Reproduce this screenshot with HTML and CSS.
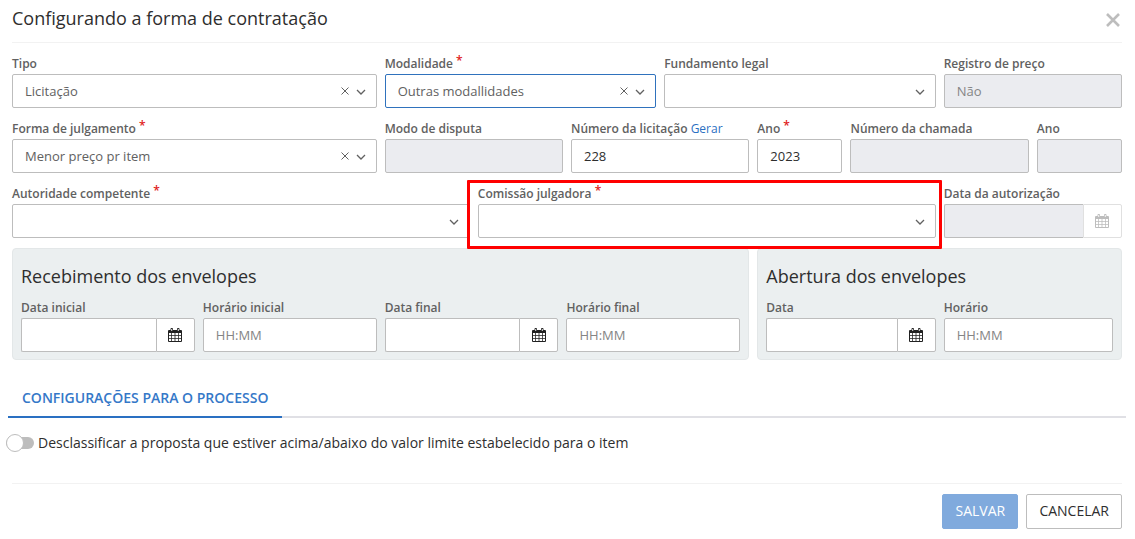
FILE: index.html
```html
<!DOCTYPE html>
<html lang="pt-BR">
<head>
<meta charset="utf-8">
<meta name="viewport" content="width=device-width, initial-scale=1">
<title>Configurando a forma de contratação</title>
<link rel="stylesheet" href="styles.css">
</head>
<body>
<svg class="sprite" aria-hidden="true">
  <symbol id="chevron" viewBox="0 0 10 6"><path d="M1 1l4 4 4-4" fill="none" stroke="currentColor" stroke-width="1.3"/></symbol>
  <symbol id="cross" viewBox="0 0 8 8"><path d="M.5.5l7 7M7.500.5l-7 7" fill="none" stroke="currentColor" stroke-width="1"/></symbol>
  <symbol id="calendar" viewBox="0 0 14 14"><path fill="currentColor" fill-rule="evenodd" d="M1 2h1.500V1q0-1 1-1h.5q1 0 1 1v1h4V1q0-1 1-1h.5q1 0 1 1v1H13q1 0 1 1v10q0 1-1 1H1q-1 0-1-1V3q0-1 1-1zM3.300 1v2h.9V1zM9.800 1v2h.9V1zM1 5v2h2.250V5zM4 5v2h2.600V5zM7.400 5v2H10V5zM10.750 5v2H13V5zM1 7.800v2.100h2.250V7.800zM4 7.800v2.100h2.600V7.800zM7.400 7.800v2.100H10V7.800zM10.750 7.800v2.100H13V7.800zM1 10.700V13h2.250v-2.300zM4 10.700V13h2.600v-2.300zM7.400 10.700V13H10v-2.300zM10.750 10.700V13H13v-2.300z"/></symbol>
</svg>
<form class="dialog">
  <header class="dialog-header">
    <h1 class="title">Configurando a forma de contratação</h1>
    <button class="close" type="button" aria-label="Fechar"><svg viewBox="0 0 14 14"><path d="M1 1l12 12M13 1L1 13" fill="none" stroke="currentColor" stroke-width="2.600"/></svg></button>
  </header>

  <div class="grid">
    <div class="field span-4">
      <label class="label" for="tipo">Tipo</label>
      <div class="select"><select id="tipo" class="control"><option>Licitação</option></select><button class="clear" type="button" aria-label="Limpar tipo"><svg><use href="#cross"/></svg></button><svg class="arrow"><use href="#chevron"/></svg></div>
    </div>
    <div class="field span-3">
      <label class="label" for="modalidade">Modalidade <span class="required">*</span></label>
      <div class="select"><select id="modalidade" class="control active"><option>Outras modallidades</option></select><button class="clear" type="button" aria-label="Limpar modalidade"><svg><use href="#cross"/></svg></button><svg class="arrow"><use href="#chevron"/></svg></div>
    </div>
    <div class="field span-3">
      <label class="label" for="fundamento">Fundamento legal</label>
      <div class="select"><select id="fundamento" class="control"><option></option></select><svg class="arrow"><use href="#chevron"/></svg></div>
    </div>
    <div class="field span-2">
      <label class="label" for="registro">Registro de preço</label>
      <input id="registro" class="control" type="text" value="Não" disabled>
    </div>

    <div class="field span-4">
      <label class="label" for="forma">Forma de julgamento <span class="required">*</span></label>
      <div class="select"><select id="forma" class="control"><option>Menor preço pr item</option></select><button class="clear" type="button" aria-label="Limpar forma de julgamento"><svg><use href="#cross"/></svg></button><svg class="arrow"><use href="#chevron"/></svg></div>
    </div>
    <div class="field span-2">
      <label class="label" for="modo">Modo de disputa</label>
      <input id="modo" class="control" type="text" disabled>
    </div>
    <div class="field span-2">
      <div class="label"><label for="numero">Número da licitação</label> <a class="link" href="#numero">Gerar</a></div>
      <input id="numero" class="control" type="text" value="228">
    </div>
    <div class="field">
      <label class="label" for="ano">Ano <span class="required">*</span></label>
      <input id="ano" class="control" type="text" value="2023">
    </div>
    <div class="field span-2">
      <label class="label" for="chamada">Número da chamada</label>
      <input id="chamada" class="control" type="text" disabled>
    </div>
    <div class="field">
      <label class="label" for="ano-chamada">Ano</label>
      <input id="ano-chamada" class="control" type="text" disabled>
    </div>

    <div class="field span-5">
      <label class="label" for="autoridade">Autoridade competente <span class="required">*</span></label>
      <div class="select"><select id="autoridade" class="control"><option></option></select><svg class="arrow"><use href="#chevron"/></svg></div>
    </div>
    <div class="field span-5 highlight">
      <label class="label" for="comissao">Comissão julgadora <span class="required">*</span></label>
      <div class="select"><select id="comissao" class="control"><option></option></select><svg class="arrow"><use href="#chevron"/></svg></div>
    </div>
    <div class="field span-2">
      <label class="label" for="autorizacao">Data da autorização</label>
      <div class="date"><input id="autorizacao" class="control" type="text" disabled><button class="date-button" type="button" aria-label="Abrir calendário" disabled><svg><use href="#calendar"/></svg></button></div>
    </div>
  </div>

  <div class="grid panels">
    <section class="panel span-8">
      <h2 class="title panel-title">Recebimento dos envelopes</h2>
      <div class="panel-fields">
        <div class="field">
          <label class="label" for="data-inicial">Data inicial</label>
          <div class="date"><input id="data-inicial" class="control" type="text"><button class="date-button" type="button" aria-label="Abrir calendário"><svg><use href="#calendar"/></svg></button></div>
        </div>
        <div class="field">
          <label class="label" for="hora-inicial">Horário inicial</label>
          <input id="hora-inicial" class="control" type="text" placeholder="HH:MM">
        </div>
        <div class="field">
          <label class="label" for="data-final">Data final</label>
          <div class="date"><input id="data-final" class="control" type="text"><button class="date-button" type="button" aria-label="Abrir calendário"><svg><use href="#calendar"/></svg></button></div>
        </div>
        <div class="field">
          <label class="label" for="hora-final">Horário final</label>
          <input id="hora-final" class="control" type="text" placeholder="HH:MM">
        </div>
      </div>
    </section>
    <section class="panel span-4">
      <h2 class="title panel-title">Abertura dos envelopes</h2>
      <div class="panel-fields">
        <div class="field">
          <label class="label" for="data-abertura">Data</label>
          <div class="date"><input id="data-abertura" class="control" type="text"><button class="date-button" type="button" aria-label="Abrir calendário"><svg><use href="#calendar"/></svg></button></div>
        </div>
        <div class="field">
          <label class="label" for="hora-abertura">Horário</label>
          <input id="hora-abertura" class="control" type="text" placeholder="HH:MM">
        </div>
      </div>
    </section>
  </div>

  <nav class="tabs"><a class="tab" href="#configuracoes">CONFIGURAÇÕES PARA O PROCESSO</a></nav>

  <div class="option" id="configuracoes">
    <input id="desclassificar" class="switch" type="checkbox" role="switch">
    <label for="desclassificar">Desclassificar a proposta que estiver acima/abaixo do valor limite estabelecido para o item</label>
  </div>

  <footer class="dialog-footer">
    <button class="button primary" type="submit" disabled>SALVAR</button>
    <button class="button" type="button">CANCELAR</button>
  </footer>
</form>
</body>
</html>
```
FILE: styles.css
```css
* {
  box-sizing: border-box;
}

body {
  margin: 0;
  background: #fff;
  color: #2e2e2e;
  font: 13px/20px "Open Sans", "Noto Sans", sans-serif;
}

button,
input,
select {
  margin: 0;
  font: inherit;
  color: inherit;
}

.sprite {
  display: none;
}

.dialog {
  padding: 0 13px 10px 12px;
}

.dialog-header {
  display: flex;
  align-items: center;
  justify-content: space-between;
  height: 43px;
  padding-bottom: 6px;
  border-bottom: 1px solid #f2f2f2;
  margin-bottom: 11px;
}

.title {
  margin: 0;
  font-size: 18px;
  font-weight: 400;
  line-height: 24px;
}

.close {
  display: flex;
  padding: 3px 2px 0;
  border: 0;
  background: none;
  color: #bdbdbd;
}

.close svg {
  width: 14px;
  height: 14px;
}

.grid {
  display: grid;
  grid-template-columns: repeat(12, minmax(0, 1fr));
  gap: 11px 8px;
}

.span-2 { grid-column: span 2; }
.span-3 { grid-column: span 3; }
.span-4 { grid-column: span 4; }
.span-5 { grid-column: span 5; }
.span-8 { grid-column: span 8; }

.field {
  display: flex;
  flex-direction: column;
  min-width: 0;
}

.label {
  height: 20px;
  color: #616161;
  font-size: 12px;
  font-weight: 600;
  white-space: nowrap;
}

.required {
  color: #e02020;
  line-height: 0;
  vertical-align: 3px;
}

.link {
  color: #2a70c2;
  font-weight: 400;
  text-decoration: none;
}

.control {
  width: 100%;
  height: 34px;
  padding: 0 12px;
  border: 1px solid #bdbdbd;
  border-radius: 2px;
  outline: 0;
  background: #fff;
  appearance: none;
}

.control:disabled {
  background: #ebecf0;
  color: #858585;
  opacity: 1;
}

.control::placeholder {
  color: #858585;
  opacity: 1;
}

.select {
  position: relative;
  color: #616161;
}

.control.active {
  border-color: #2f72bd;
}

.clear {
  position: absolute;
  top: 13px;
  right: 28px;
  display: flex;
  padding: 0;
  border: 0;
  background: none;
}

.clear svg {
  width: 8px;
  height: 8px;
}

.arrow {
  position: absolute;
  top: 15px;
  right: 11px;
  width: 10px;
  height: 6px;
  pointer-events: none;
}

.highlight {
  position: relative;
}

.highlight::after {
  content: "";
  position: absolute;
  inset: -4px -6px -11px -11px;
  border: 3px solid #f00;
  border-radius: 1px;
  pointer-events: none;
}

.date {
  display: flex;
}

.date .control {
  flex: 1;
  min-width: 0;
  border-right: 0;
  border-radius: 2px 0 0 2px;
}

.date-button {
  display: flex;
  align-items: center;
  justify-content: center;
  width: 39px;
  height: 34px;
  padding: 0;
  border: 1px solid #bdbdbd;
  border-radius: 0 2px 2px 0;
  background: #fff;
  color: #212121;
}

.date-button:disabled {
  border-color: #e0e0e0;
  color: #bdbdbd;
}

.date-button svg {
  width: 14px;
  height: 14px;
}

.panels {
  margin-top: 10px;
}

.panel {
  padding: 15px 8px 7px;
  border: 1px solid #e3e7e8;
  border-radius: 4px;
  background: #ebeff0;
}

.panel-title {
  margin-bottom: 10px;
}

.panel-fields {
  display: grid;
  grid-auto-flow: column;
  grid-auto-columns: minmax(0, 1fr);
  gap: 8px;
}

.tabs {
  display: flex;
  margin: 18px -4px 0;
  box-shadow: inset 0 -2px #e0e0e5;
}

.tab {
  padding: 10px 14px 8px;
  border-bottom: 2px solid #2a70c2;
  color: #3578c8;
  font-size: 14px;
  font-weight: 600;
  text-decoration: none;
}

.option {
  display: flex;
  align-items: center;
  gap: 4px;
  margin: 15px 0 30px -6px;
  font-size: 14px;
}

.switch {
  display: flex;
  align-items: center;
  width: 28px;
  height: 12px;
  border-radius: 6px;
  background: #bdbdbd;
  appearance: none;
}

.switch::before {
  content: "";
  width: 16px;
  height: 16px;
  border: 1px solid #bdbdbd;
  border-radius: 50%;
  background: #fff;
}

.switch:checked::before {
  margin-left: auto;
}

.dialog-footer {
  display: flex;
  justify-content: flex-end;
  gap: 8px;
  padding-top: 10px;
  border-top: 1px solid #f2f2f2;
}

.button {
  height: 35px;
  padding: 0 12px 2px;
  border: 1px solid #bdbdbd;
  border-radius: 2px;
  background: #fff;
  font-size: 14px;
}

.primary {
  min-width: 76px;
  border-color: #80aadd;
  background: #80aadd;
  color: #fff;
}
```
